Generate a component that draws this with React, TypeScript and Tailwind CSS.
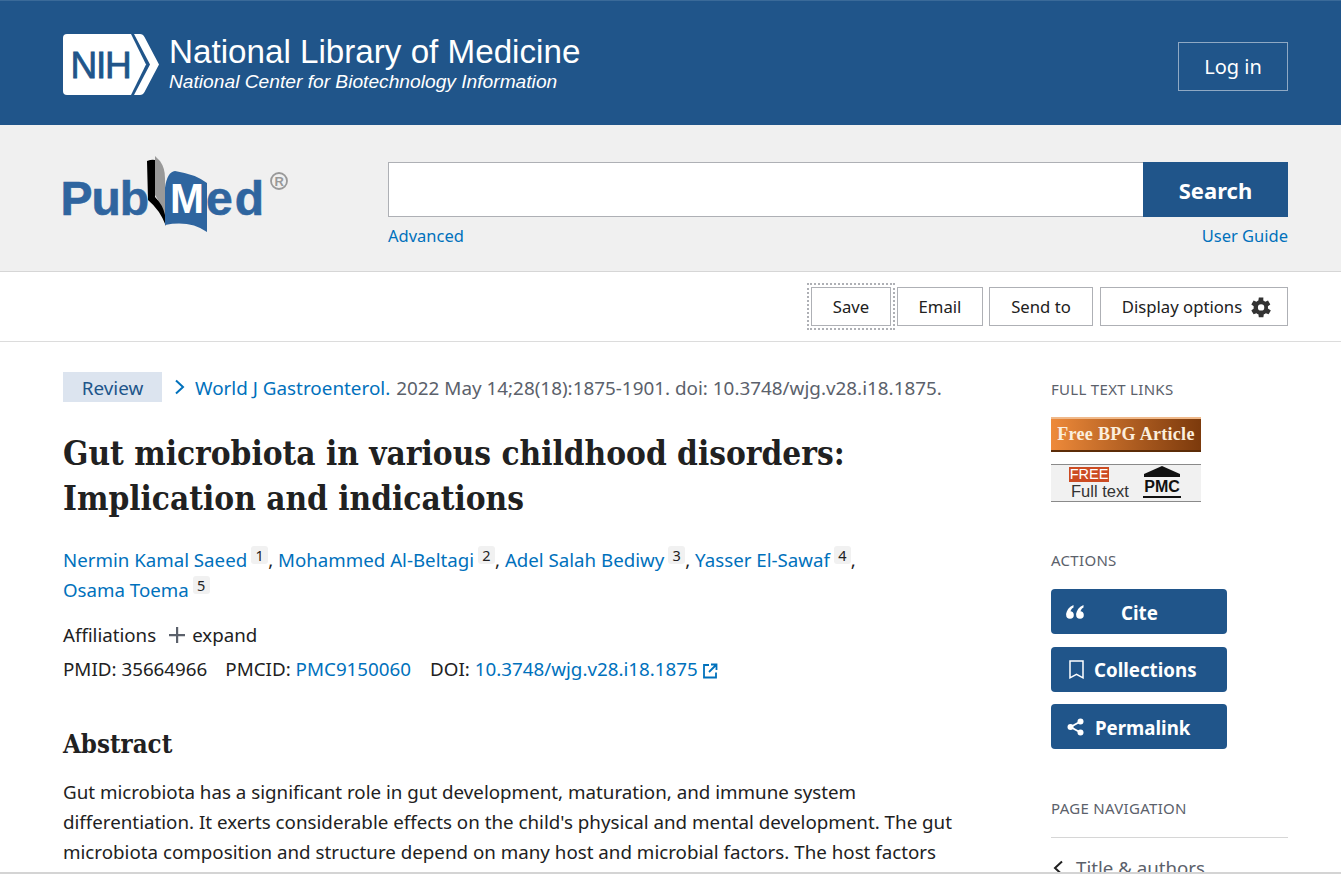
import React from "react";

const sans = "font-['Noto_Sans','Open_Sans',sans-serif]";

function NihLogo() {
  return (
    <svg width="98" height="63" viewBox="0 0 98 63" className="shrink-0">
      <path d="M4 1H68L83 31.500L68 62H4Q0 62 0 58V5Q0 1 4 1Z" fill="#fff" />
      <path d="M71 1H77Q80 1 81.500 4L96 31.500L81.500 59Q80 62 77 62H71L87 31.500Z" fill="#fff" />
      <text x="7.500" y="45" fontFamily="'Liberation Sans',sans-serif" fontSize="37" fontWeight="400" fill="#20558a" stroke="#20558a" strokeWidth="0.8" letterSpacing="-1.200">NIH</text>
    </svg>
  );
}

function PubMedLogo() {
  return (
    <svg width="231" height="82" viewBox="58 153 231 82" className="shrink-0 -ml-[5px]">
      <path d="M155 156L160 161Q165 168 165 178L166 226L158 200L155 195Z" fill="#999" />
      <path d="M147 161Q152 159 155 160L155 197Q163 205 165 215L166 226Q160 210 148 200Z" fill="#000" />
      <path d="M165 188Q167 172 175 171Q195 174 207 183L207 232Q190 220 165 225Z" fill="#2f659f" />
      <text x="60.500" y="215" fontFamily="'Liberation Sans',sans-serif" fontSize="48" fontWeight="700" fill="#2f659f" stroke="#2f659f" strokeWidth="0.6" letterSpacing="-1">Pub</text>
      <text x="170" y="213" fontFamily="'Liberation Sans',sans-serif" fontSize="42" fontWeight="700" fill="#fff" textLength="34" lengthAdjust="spacingAndGlyphs">M</text>
      <text x="206" y="215" fontFamily="'Liberation Sans',sans-serif" fontSize="48" fontWeight="700" fill="#2f659f" stroke="#2f659f" strokeWidth="0.6" letterSpacing="2">ed</text>
      <circle cx="279" cy="181" r="8" fill="none" stroke="#999" strokeWidth="1.800" />
      <text x="274.500" y="186" fontFamily="'Liberation Sans',sans-serif" fontSize="13" fontWeight="700" fill="#999">R</text>
    </svg>
  );
}

function ToolButton({ children, w, cls = "" }: { children: React.ReactNode; w: string; cls?: string }) {
  return (
    <button className={`h-[39px] ${w} ${cls} border border-[#aeb0b5] bg-white text-[16.700px] text-[#212121] flex items-center justify-center pt-[1px]`}>
      {children}
    </button>
  );
}

function Sup({ n }: { n: number }) {
  return (
    <span className="inline-block align-[6px] ml-[4px] w-[17px] text-center h-[18px] leading-[18px] text-[14.500px] bg-[#f1f1f1] rounded-[3px] text-[#212121]">{n}</span>
  );
}

function ActionButton({ icon, label, cls }: { icon: React.ReactNode; label: string; cls: string }) {
  return (
    <div className={`h-[45px] w-[176px] bg-[#20558a] rounded-[4px] flex items-center text-white font-bold text-[18.700px] ${cls}`}>
      {icon}
      <span className="pt-[3px]">{label}</span>
    </div>
  );
}

export default function App() {
  return (
    <div className={`relative h-[875px] w-full overflow-hidden bg-white ${sans} text-[#212121]`}>
      <header className="h-[125px] bg-[#20558a] flex items-center justify-between pr-[53px] pl-[63px] border-t border-[#3a6a99]">
        <div className="flex items-center gap-[8px] text-white font-['Liberation_Sans',sans-serif] mt-[3px]">
          <NihLogo />
          <div className="flex flex-col">
            <span className="text-[33.200px] leading-[34px]">National Library of Medicine</span>
            <span className="text-[19.200px] leading-[26px] italic">National Center for Biotechnology Information</span>
          </div>
        </div>
        <button className="h-[49px] w-[110px] mt-[6px] pt-[2px] border border-[#8fa9c4] text-white text-[20px]">Log in</button>
      </header>

      <section className="h-[147px] bg-[#f0f0f0] border-b border-[#d6d6d6] flex pl-[63px] pr-[53px]">
        <div className="w-[325px] pt-[28px]">
          <PubMedLogo />
        </div>
        <div className="flex-1 pt-[37px]">
          <div className="flex h-[55px]">
            <div className="flex-1 bg-white border border-[#aeb0b5] border-r-0" />
            <button className="w-[145px] bg-[#20558a] text-white font-bold text-[22px] pt-[2px]">Search</button>
          </div>
          <div className="flex justify-between mt-[7px] text-[16.500px] leading-[24px] text-[#0071bc]">
            <span>Advanced</span>
            <span>User Guide</span>
          </div>
        </div>
      </section>

      <section className="h-[70px] border-b border-[#dcdcdc] flex items-center justify-end gap-[6px] pr-[53px]">
        <div className="relative">
          <ToolButton w="w-[80px]">Save</ToolButton>
          <div className="absolute -inset-[4px] border-2 border-dotted border-[#aeb0b5]" />
        </div>
        <ToolButton w="w-[86px]">Email</ToolButton>
        <div className="mr-[1px]">
          <ToolButton w="w-[104px]">Send to</ToolButton>
        </div>
        <ToolButton w="w-[188px]" cls="pl-[6px]">
          Display options
          <svg viewBox="3.300 2.800 18.500 18.500" width="21" height="21" className="ml-[9px]" fill="#333">
            <path fillRule="evenodd" d="M18.200 13a7.600 7.600 0 0 0 0-2l2.100-1.600-2-3.500-2.500 1a7.500 7.500 0 0 0-1.700-1L14.200 3.300h-4l-.4 2.600a7.500 7.500 0 0 0-1.700 1l-2.500-1-2 3.500L5.700 11a7.600 7.600 0 0 0 0 2l-2.100 1.600 2 3.500 2.500-1a7.500 7.500 0 0 0 1.700 1l.4 2.600h4l.4-2.600a7.500 7.500 0 0 0 1.700-1l2.500 1 2-3.500zM12.200 14.800a2.800 2.800 0 1 1 0-5.600 2.800 2.800 0 0 1 0 5.600z" />
          </svg>
        </ToolButton>
      </section>

      <main className="flex pl-[63px] pr-[53px]">
        <article className="w-[895px] pt-[30px] shrink-0">
          <div className="flex items-center h-[30px] text-[18.860px] whitespace-nowrap">
            <span className="w-[99px] h-[30px] bg-[#dce4ef] text-[#20558a] flex items-center justify-center pt-[2px]">Review</span>
            <svg width="12" height="16" viewBox="0 0 12 16" className="ml-[12px] mr-[9px] -mt-[1px]" fill="none" stroke="#0071bc" strokeWidth="2">
              <path d="M2 1.500L9 8L2 14.500" />
            </svg>
            <span className="text-[#0071bc] pt-[2px]">World J Gastroenterol.</span>
            <span className="text-[#5b616b] ml-[6px] pt-[2px]">2022 May 14;28(18):1875-1901. doi: 10.3748/wjg.v28.i18.1875.</span>
          </div>

          <h1 className="mt-[29px] font-['DejaVu_Serif_Condensed','DejaVu_Serif',serif] font-bold text-[33.100px] leading-[45px] text-[#212121]">
            Gut microbiota in various childhood disorders:<br />Implication and indications
          </h1>

          <div className="mt-[24px] text-[18.700px] leading-[30px] text-[#0071bc]">
            <div>Nermin Kamal Saeed<Sup n={1} /><span className="text-[#212121]">, </span>Mohammed Al-Beltagi<Sup n={2} /><span className="text-[#212121]">, </span>Adel Salah Bediwy<Sup n={3} /><span className="text-[#212121]">, </span>Yasser El-Sawaf<Sup n={4} /><span className="text-[#212121]">,</span></div>
            <div>Osama Toema<Sup n={5} /></div>
          </div>

          <div className="mt-[15px] flex items-center text-[18.700px] leading-[30px]">
            <span>Affiliations</span>
            <svg width="16" height="16" viewBox="0 0 16 16" className="ml-[13px] mr-[7px]" fill="#5b616b"><path d="M7 0h2.200v7H16v2.200H9.200V16H7V9.200H0V7h7z" /></svg>
            <span>expand</span>
          </div>

          <div className="mt-[4px] flex items-center text-[18.800px] leading-[30px]">
            <span>PMID: 35664966</span>
            <span className="ml-[18px]">PMCID: <span className="text-[#0071bc]">PMC9150060</span></span>
            <span className="ml-[19px]">DOI: <span className="text-[#0071bc]">10.3748/wjg.v28.i18.1875</span></span>
            <svg width="16" height="16" viewBox="0 0 16 16" className="ml-[4px] mt-[3px]" fill="none" stroke="#0071bc" strokeWidth="1.800">
              <path d="M7 2H2v12.500h12V9.500M9 1.500h5.500V7M14.500 1.500L7 9" />
            </svg>
          </div>

          <h2 className="mt-[43px] font-['DejaVu_Serif_Condensed','DejaVu_Serif',serif] font-bold text-[25.600px] leading-[34px]">Abstract</h2>

          <p className="mt-[16px] text-[18.760px] leading-[30px] w-[895px] whitespace-nowrap">
            Gut microbiota has a significant role in gut development, maturation, and immune system<br />
            differentiation. It exerts considerable effects on the child's physical and mental development. The gut<br />
            microbiota composition and structure depend on many host and microbial factors. The host factors
          </p>
        </article>

        <aside className="ml-[93px] flex-1 pt-[35px]">
          <div className="text-[15px] leading-[24px] tracking-[0.3px] text-[#5b616b]">FULL TEXT LINKS</div>
          <div className="mt-[16px] h-[35px] w-[150px] bg-gradient-to-r from-[#ee8a3a] to-[#7c3a0c] border-t-2 border-[#f0b98a] border-b-2 border-b-[#5c2c08] flex items-center justify-center text-[#fbeedd] font-['Liberation_Serif',serif] font-bold text-[18px] tracking-[0.3px]">
            Free BPG Article
          </div>
          <div className="mt-[12px] h-[38px] w-[150px] bg-[#f1f1f1] border-y border-[#8a8a8a] flex font-['Liberation_Sans',sans-serif] text-[#333]">
            <div className="ml-[18px] w-[65px] flex flex-col items-start">
              <span className="mt-[2px] h-[15px] w-[40px] text-center bg-[#cc4b22] text-white text-[14.500px] leading-[15px]">FREE</span>
              <span className="text-[16.500px] leading-[19px] ml-[2px]">Full text</span>
            </div>
            <div className="ml-[8px] w-[40px] flex flex-col items-center">
              <svg width="40" height="13" viewBox="0 0 40 13" className="mt-[1px]"><path d="M20 0L38 8V11H2V8Z" fill="#111" /></svg>
              <span className="text-[16px] leading-[16px] font-bold text-[#111]">PMC</span>
              <div className="h-[2px] w-[38px] bg-[#111] mt-[1px]" />
            </div>
          </div>

          <div className="mt-[46px] text-[15px] leading-[24px] tracking-[0.3px] text-[#5b616b]">ACTIONS</div>
          <div className="mt-[17px] flex flex-col gap-[12.500px]">
            <ActionButton cls="pl-[15px] gap-[37px]" label="Cite" icon={
              <svg width="18" height="14" viewBox="0 0 18 14" fill="#fff"><circle cx="4" cy="10" r="3.800" /><circle cx="14" cy="10" r="3.800" /><path d="M0.300 10Q0.300 3 7.500 0V2.500Q4 4.500 4.500 8zM10.300 10Q10.300 3 17.500 0V2.500Q14 4.500 14.500 8z" /></svg>
            } />
            <ActionButton cls="pl-[17px] gap-[9px]" label="Collections" icon={
              <svg width="17" height="19" viewBox="0 0 17 19" fill="none" stroke="#fff" strokeWidth="1.500"><path d="M2 1h13v16.800l-6.500-3.500-6.500 3.500z" /></svg>
            } />
            <ActionButton cls="pl-[16px] gap-[11px]" label="Permalink" icon={
              <svg width="17" height="18" viewBox="0 0 17 18" fill="#fff"><circle cx="13.500" cy="3.500" r="3" /><circle cx="3.500" cy="9" r="3" /><circle cx="13.500" cy="14.500" r="3" /><path d="M13.500 3.500L3.500 9L13.500 14.500" fill="none" stroke="#fff" strokeWidth="1.800" /></svg>
            } />
          </div>

          <div className="mt-[47px] text-[15px] leading-[24px] tracking-[0.3px] text-[#5b616b]">PAGE NAVIGATION</div>
          <div className="mt-[17px] h-px bg-[#d6d6d6]" />
          <div className="mt-[15px] flex items-center text-[18.700px] leading-[30px] text-[#5b616b]">
            <svg width="12" height="16" viewBox="0 0 12 16" className="mr-[11px] ml-[2px]" fill="none" stroke="#212121" strokeWidth="2"><path d="M9 1.500L2 8L9 14.500" /></svg>
            Title &amp; authors
          </div>
        </aside>
      </main>

      <div className="absolute left-0 right-0 bottom-0 h-[3px] bg-white border-t-2 border-[#d4d4d4]" />
    </div>
  );
}
